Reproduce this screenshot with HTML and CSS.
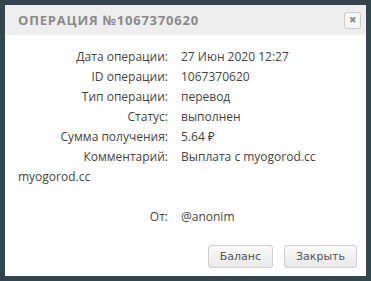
FILE: index.html
```html
<!DOCTYPE html>
<html lang="ru">
<head>
    <meta charset="UTF-8">
    <title>Операция</title>
    <link rel="stylesheet" href="styles.css">
</head>
<body>
    <div class="dialog">
        <div class="dialog-header">
            <h2 class="dialog-title">Операция №1067370620</h2>
            <button class="close-button">&#10006;</button>
        </div>

        <div class="dialog-body">
            <div class="info-grid">
                <span class="info-label">Дата операции:</span>
                <span class="info-value">27 Июн 2020 12:27</span>
                <span class="info-label">ID операции:</span>
                <span class="info-value">1067370620</span>
                <span class="info-label">Тип операции:</span>
                <span class="info-value">перевод</span>
                <span class="info-label">Статус:</span>
                <span class="info-value">выполнен</span>
                <span class="info-label">Сумма получения:</span>
                <span class="info-value">5.64 ₽</span>
                <span class="info-label">Комментарий:</span>
                <span class="info-value">Выплата с myogorod.cc</span>
            </div>
            <p class="comment-rest">myogorod.cc</p>
            <div class="info-grid info-from">
                <span class="info-label">От:</span>
                <span class="info-value">@anonim</span>
            </div>
        </div>

        <div class="dialog-footer">
            <button class="button">Баланс</button>
            <button class="button">Закрыть</button>
        </div>
    </div>
</body>
</html>
```

FILE: styles.css
```css
body {
    margin: 0;
    padding: 5px;
    background-color: #33454d;
    font-family: "Open Sans", "Noto Sans", sans-serif;
}

.dialog {
    width: 361px;
    height: 271px;
    box-sizing: border-box;
    background-color: #ffffff;
    display: flex;
    flex-direction: column;
}

.dialog-header {
    height: 30px;
    background-color: #eeeeee;
    display: flex;
    align-items: center;
    justify-content: space-between;
    padding: 0 5px 0 13px;
}

.dialog-title {
    margin: 0;
    font-size: 13px;
    font-weight: 700;
    text-transform: uppercase;
    letter-spacing: 0.8px;
    color: #8a8a8a;
}

.close-button {
    width: 17px;
    height: 17px;
    padding: 0;
    border: 1px solid #cccccc;
    border-radius: 3px;
    background-color: #f6f6f6;
    color: #8c8c8c;
    font-size: 9px;
    line-height: 15px;
    text-align: center;
    cursor: pointer;
}

.dialog-body {
    flex: 1;
    padding: 12px 13px 0;
    color: #444444;
    font-size: 12px;
    line-height: 20px;
}

.info-grid {
    display: grid;
    grid-template-columns: 150px 1fr;
    column-gap: 13px;
}

.info-label {
    text-align: right;
}

.comment-rest {
    margin: 0 0 20px;
}

.dialog-footer {
    display: flex;
    justify-content: flex-end;
    gap: 11px;
    padding: 0 9px 8px;
}

.button {
    height: 23px;
    padding: 0 11px;
    border: 1px solid #cfcfcf;
    border-radius: 3px;
    background: linear-gradient(#fbfbfb, #e8e8e8);
    color: #555555;
    font-family: "DejaVu Sans", Verdana, sans-serif;
    font-size: 11px;
    cursor: pointer;
}
```
